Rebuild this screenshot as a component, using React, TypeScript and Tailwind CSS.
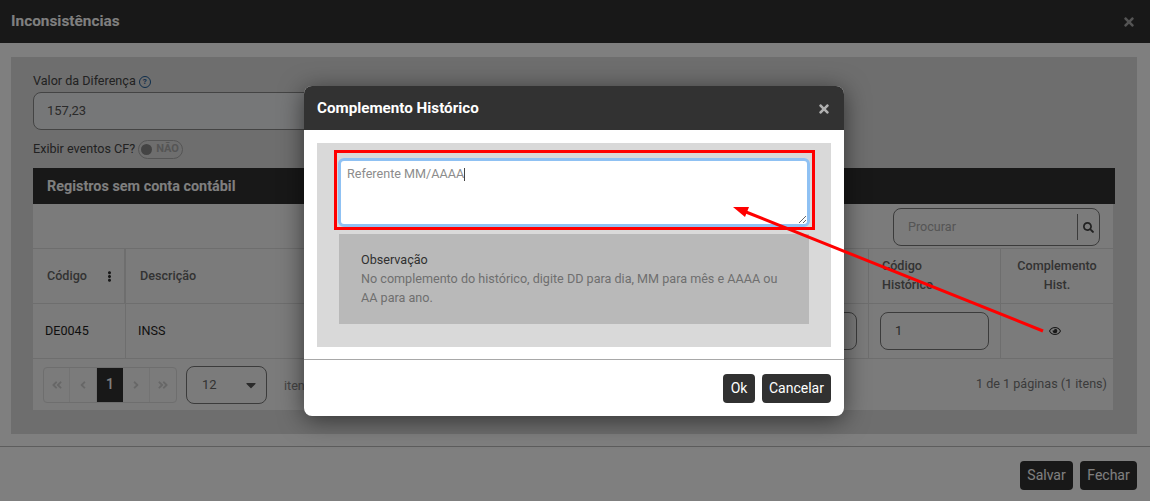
import {
  FaAngleDoubleLeft,
  FaAngleDoubleRight,
  FaAngleLeft,
  FaAngleRight,
  FaCaretDown,
  FaEllipsisV,
  FaRegEye,
  FaSearch,
  FaTimes,
} from "react-icons/fa";
import type { ReactNode } from "react";

function PageButton({ children, active }: { children: ReactNode; active?: boolean }) {
  return (
    <div
      className={
        active
          ? "flex h-[34px] w-[27px] items-center justify-center bg-[#313131] text-[14px] font-medium text-white"
          : "flex h-[34px] w-[26.5px] items-center justify-center border-r border-[#e6e6e6] text-[12px] text-[#cfcfcf] last:border-r-0"
      }
    >
      {children}
    </div>
  );
}

function Background() {
  return (
    <div className="flex h-[501px] flex-col bg-white">
      <div className="flex h-[43px] shrink-0 items-center justify-between bg-[#303030] pl-[11px] pr-[14px]">
        <span className="text-[15.4px] font-bold text-white">Inconsistências</span>
        <FaTimes className="text-[14px] text-[#a8a8a8]" />
      </div>

      <div className="ml-[11px] mr-[13px] mt-[14px] h-[377px] shrink-0 bg-[#dcdcdc] px-[22px] pt-[15px]">
        <div className="flex h-[19px] items-center gap-[3px] text-[12.6px] text-[#444]">
          Valor da Diferença
          <span className="flex h-[12px] w-[12px] items-center justify-center rounded-full border-[1.5px] border-[#1b5a96] text-[8px] font-bold leading-none text-[#1b5a96]">
            ?
          </span>
        </div>
        <div className="mt-px flex h-[38px] w-[300px] items-center rounded-[8px] border border-[#888] bg-[#eceef0] pl-[13px] text-[13px] text-[#555]">
          157,23
        </div>
        <div className="mt-[9px] flex h-[20px] items-center gap-[3px] text-[12.6px] text-[#444]">
          Exibir eventos CF?
          <span className="flex h-[19px] w-[45px] items-center gap-[4px] rounded-full border border-[#aaa] pl-[2px] text-[11px] font-bold text-[#aaa]">
            <span className="h-[11px] w-[11px] rounded-full bg-[#888]" />
            NÃO
          </span>
        </div>

        <div className="mt-[9px] flex h-[36px] items-center bg-[#303030] pl-[14px] pt-[1px] text-[14.4px] font-bold text-white">
          Registros sem conta contábil
        </div>

        <div className="mr-[2px] bg-[#f6f6f6]">
          <div className="flex h-[45px] justify-end border-b border-[#ddd] pr-[13px] pt-[4px]">
            <div className="flex h-[38px] w-[207px] items-center rounded-[8px] border border-[#777] pl-[14px] text-[12.6px] text-[#aaa]">
              <span className="flex-1">Procurar</span>
              <span className="flex h-[26px] w-[22px] items-center justify-center border-l border-[#777]">
                <FaSearch className="text-[11px] text-[#444]" />
              </span>
            </div>
          </div>

          <div className="flex h-[55px] border-b border-[#ddd] text-[12.6px] font-medium text-[#666]">
            <div className="flex w-[93px] items-center justify-between border-r-2 border-[#ddd] pl-[14px] pr-[9px]">
              Código
              <FaEllipsisV className="text-[11px] text-[#333]" />
            </div>
            <div className="flex flex-1 items-center pl-[14px]">Descrição</div>
            <div className="flex w-[133px] items-center border-x border-[#ddd] pb-[2px] pl-[13px] leading-[19px]">
              Código
              <br />
              Histórico
            </div>
            <div className="flex w-[112px] items-center justify-center pb-[2px] text-center leading-[19px]">
              Complemento
              <br />
              Hist.
            </div>
          </div>

          <div className="flex h-[55px] border-b border-[#ddd] text-[12.6px] text-[#1f1f1f]">
            <div className="flex w-[93px] items-center border-r border-[#ddd] pl-[12px]">DE0045</div>
            <div className="flex flex-1 items-center pl-[12px]">INSS</div>
            <div className="flex items-center pr-[11px]">
              <div className="h-[38px] w-[40px] rounded-[8px] border border-[#777]" />
            </div>
            <div className="flex w-[133px] items-center border-x border-[#ddd] pl-[11px]">
              <div className="flex h-[38px] w-[109px] items-center rounded-[8px] border border-[#777] pl-[14px] text-[13px] text-[#555]">
                1
              </div>
            </div>
            <div className="flex w-[112px] items-center justify-center pr-[5px]">
              <FaRegEye className="text-[12px] text-[#333]" />
            </div>
          </div>

          <div className="flex h-[51px] items-center pl-[10px] pr-[6px] text-[12.6px] text-[#888]">
            <div className="flex h-[36px] w-[134px] items-center overflow-hidden rounded-[4px] border border-[#ddd]">
              <PageButton>
                <FaAngleDoubleLeft />
              </PageButton>
              <PageButton>
                <FaAngleLeft />
              </PageButton>
              <PageButton active>1</PageButton>
              <PageButton>
                <FaAngleRight />
              </PageButton>
              <PageButton>
                <FaAngleDoubleRight />
              </PageButton>
            </div>
            <div className="ml-[9px] flex h-[38px] w-[81px] items-center justify-between rounded-[8px] border border-[#777] pl-[15px] pr-[7px] text-[13px] text-[#666]">
              12
              <FaCaretDown className="text-[16px] text-[#555]" />
            </div>
            <span className="ml-[17px] mt-[4px]">itens por página</span>
            <span className="ml-auto text-[#777]">1 de 1 páginas (1 itens)</span>
          </div>
        </div>
      </div>

      <div className="mt-[12px] flex flex-1 justify-end border-t border-[#bbb] pr-[13px] pt-[14px]">
        <div className="flex h-[29px] gap-[7px] text-[14px] text-white">
          <span className="flex w-[53px] items-center justify-center rounded-[4px] bg-[#313131]">Salvar</span>
          <span className="flex w-[57px] items-center justify-center rounded-[4px] bg-[#313131]">Fechar</span>
        </div>
      </div>
    </div>
  );
}

function Dialog() {
  return (
    <div className="absolute left-[304px] top-[86px] flex h-[330px] w-[540px] flex-col overflow-hidden rounded-[8px] bg-white shadow-[0_4px_24px_rgba(0,0,0,0.55)]">
      <div className="flex h-[44px] shrink-0 items-center justify-between bg-[#323232] px-[13px] pt-[1px]">
        <span className="text-[15.2px] font-bold text-white">Complemento Histórico</span>
        <FaTimes className="text-[14px] text-[#b0b0b0]" />
      </div>

      <div className="mx-[13px] mt-[13px] h-[204px] shrink-0 bg-[#d9d9d9] px-[22px] pt-[15px]">
        <div className="relative -mx-px h-[69px]">
          <textarea
            placeholder="Referente MM/AAAA"
            className="block h-[69px] w-full resize-y rounded-[6px] border-[3px] border-[#8fc1f3] bg-white pl-[6px] pt-[3px] text-[12.6px] leading-[20px] text-[#555] outline-none placeholder:text-[#8c8c8c]"
          />
          <span className="absolute left-[126px] top-[10px] h-[13px] w-px bg-[#444]" />
        </div>
        <div className="mt-[7px] h-[90px] bg-[#b9b9b9] pl-[22px] pr-[20px] pt-[16px] text-[12.6px] leading-[19px] text-[#6f6f6f]">
          <div className="text-[#303030]">Observação</div>
          No complemento do histórico, digite DD para dia, MM para mês e AAAA ou AA para ano.
        </div>
      </div>

      <div className="mt-[12px] flex flex-1 justify-end gap-[7px] border-t border-[#a8a8a8] pr-[13px] pt-[14px]">
        <button className="h-[29px] w-[32px] rounded-[4px] bg-[#313131] text-[14px] text-white">Ok</button>
        <button className="h-[29px] w-[69px] rounded-[4px] bg-[#313131] text-[14px] text-white">Cancelar</button>
      </div>
    </div>
  );
}

export default function App() {
  return (
    <div className="relative h-[501px] w-[1150px] overflow-hidden font-['Roboto',sans-serif]">
      <Background />
      <div className="absolute inset-0 bg-black/50" />
      <Dialog />

      {/* annotation painted on the screenshot */}
      <div className="absolute left-[334px] top-[150px] h-[80px] w-[481px] border-[3px] border-[#ff0000]" />
      <svg className="absolute left-0 top-0" width="1150" height="501">
        <line x1="1043" y1="331" x2="746" y2="212" stroke="#ff0000" strokeWidth="3" />
        <polygon points="733,207 749,207 745,217" fill="#ff0000" />
      </svg>
    </div>
  );
}
